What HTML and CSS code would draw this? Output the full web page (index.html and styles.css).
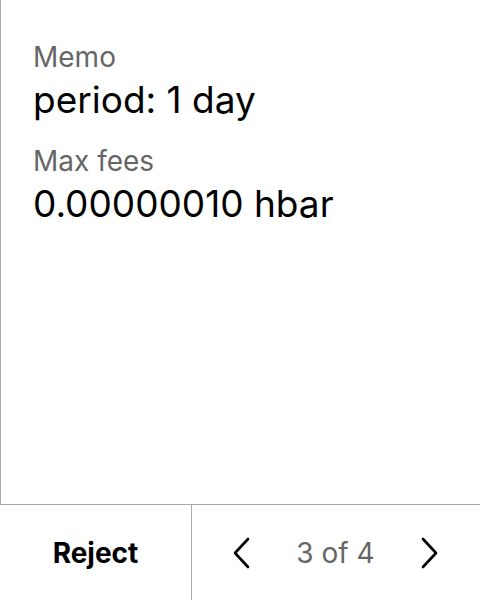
FILE: index.html
```html
<!DOCTYPE html>
<html>
<head>
<meta charset="utf-8">
<link rel="stylesheet" href="styles.css">
</head>
<body>
<div class="screen">
  <div class="content">
    <div class="field">
      <div class="label">Memo</div>
      <div class="value">period: 1 day</div>
    </div>
    <div class="field">
      <div class="label">Max fees</div>
      <div class="value">0.00000010 hbar</div>
    </div>
  </div>
  <div class="footer">
    <div class="reject">Reject</div>
    <div class="pager">
      <svg class="chev" width="24" height="36" viewBox="0 0 24 36"><path d="M19 4 L6 18 L19 32" fill="none" stroke="#000" stroke-width="2.6" stroke-linecap="round" stroke-linejoin="round"/></svg>
      <span class="count">3 of 4</span>
      <svg class="chev" width="24" height="36" viewBox="0 0 24 36"><path d="M5 4 L18 18 L5 32" fill="none" stroke="#000" stroke-width="2.6" stroke-linecap="round" stroke-linejoin="round"/></svg>
    </div>
  </div>
</div>
</body>
</html>
```
FILE: styles.css
```css
html, body { margin: 0; padding: 0; background: #fff; }
body { font-family: Inter, "Noto Sans", sans-serif; }
.screen { width: 480px; height: 600px; display: flex; flex-direction: column; }
.content { flex: 1; border-left: 1px solid #aaa; padding: 39px 0 0 32px; display: flex; flex-direction: column; gap: 21px; }
.field { display: flex; flex-direction: column; gap: 3px; }
.label { font-size: 28px; color: #666; line-height: 36px; }
.value { font-size: 37px; color: #000; line-height: 44px; }
.footer { height: 95px; border-top: 1px solid #aaa; display: flex; }
.reject { width: 191px; border-right: 1px solid #aaa; display: flex; align-items: center; justify-content: center; font-size: 28px; font-weight: 700; color: #000; }
.pager { flex: 1; display: flex; align-items: center; justify-content: space-between; padding: 0 38px 0 37px; }
.count { font-size: 28px; color: #666; }
.chev { display: block; }
```
